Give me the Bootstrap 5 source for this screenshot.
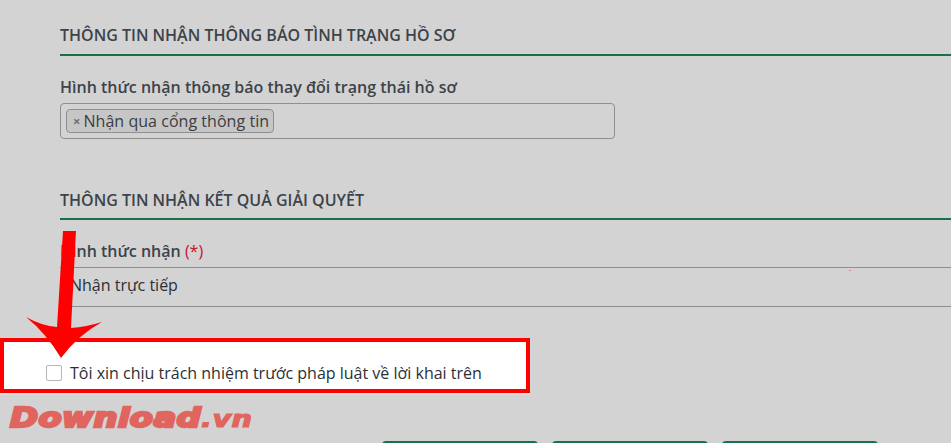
<!DOCTYPE html>
<html lang="vi">
<head>
<meta charset="utf-8">
<link href="https://cdn.jsdelivr.net/npm/bootstrap@5.3.0/dist/css/bootstrap.min.css" rel="stylesheet">
<style>
html,body{height:443px;overflow:hidden}
body{background:#d3d3d3;font-family:"Open Sans",sans-serif;color:#2b2f36;position:relative}
.page-form{padding-left:60px}
.sec-title{font-size:16px;font-weight:600;line-height:20px;padding:25px 0 9px;border-bottom:2px solid #157347;color:#3d4349;margin:0}
.sec-two{padding:0 0 8px;margin-top:51px}
.fld-label{font-size:16px;font-weight:600;line-height:20px;margin:21px 0 0;color:#3d4349}
.tag-box{width:555px;height:36px;border:1px solid #8f8f8f;border-radius:4px;padding:5px;margin-top:6px}
.tag-chip{font-size:16px;line-height:22px;height:24px;padding:0 4px 0 6px;background:#c6c6c6;border:1px solid #8f8f8f;border-radius:4px;color:#3a3d42;gap:3px;letter-spacing:.04px}
.tag-x{font-size:13px;color:#6c6f73;font-weight:700}
.req{color:#c8102e;font-weight:400}
.plain-sel{border-top:1px solid #8f8f8f;border-bottom:1px solid #8f8f8f;height:40px;margin-top:6px;padding-left:10px;font-size:16px;line-height:35px}
.confirm-box{width:530px;height:55px;margin-top:31px;border:4px solid #f00;background:#fff;padding:21px 0 0 42px;gap:8px;font-size:16px;line-height:20px;box-shadow:0 2px 0 #dedede}
.fake-check{width:16px;height:16px;border:1px solid #b5b5b5;border-radius:2px;background:#fff;margin-top:2px}
.foot-row{margin-top:12px;height:38px}
.logo-slot{width:382px;padding-left:10px}
.wm-logo{font-family:"DejaVu Sans",sans-serif;font-weight:700;font-style:italic;font-size:27px;line-height:26px;color:#e0655f;-webkit-text-stroke:2.4px #e0655f;letter-spacing:.3px;transform:scaleX(1.25);transform-origin:left center;white-space:nowrap}
.wm-logo span{font-size:23px;-webkit-text-stroke:1.2px #e0655f}
.act-row{gap:14px;height:38px;overflow:hidden}
.act-btn{width:156px;height:30px;margin-top:36px;background:#157347;border:0;border-radius:4px}
.arrow-over{position:absolute;left:0;top:225px;width:120px;height:140px;pointer-events:none}
.stray-dot{position:absolute;left:849px;top:270px;width:2px;height:1px;background:#e77}
</style>
</head>
<body>
<div class="page-form">
  <h6 class="sec-title">THÔNG TIN NHẬN THÔNG BÁO TÌNH TRẠNG HỒ SƠ</h6>
  <p class="fld-label">Hình thức nhận thông báo thay đổi trạng thái hồ sơ</p>
  <div class="tag-box d-flex align-items-start">
    <span class="tag-chip d-inline-flex align-items-center"><span class="tag-x">×</span>Nhận qua cổng thông tin</span>
  </div>
  <h6 class="sec-title sec-two">THÔNG TIN NHẬN KẾT QUẢ GIẢI QUYẾT</h6>
  <p class="fld-label">Hình thức nhận <span class="req">(*)</span></p>
  <div class="plain-sel">Nhận trực tiếp</div>
</div>
<div class="confirm-box d-flex align-items-start">
  <span class="fake-check flex-shrink-0"></span>
  <span>Tôi xin chịu trách nhiệm trước pháp luật về lời khai trên</span>
</div>
<div class="foot-row d-flex">
  <div class="logo-slot flex-shrink-0"><div class="wm-logo">Download<span>.vn</span></div></div>
  <div class="act-row d-flex">
    <button class="act-btn" type="button"></button>
    <button class="act-btn" type="button"></button>
    <button class="act-btn" type="button"></button>
  </div>
</div>
<span class="stray-dot"></span>
<svg class="arrow-over" viewBox="0 0 120 140"><path fill="#f00" d="M63 6L76 6L71 103Q86 102 102 97Q78 110 61 133Q46 108 26 92Q42 101 57 102Z"/></svg>
<script src="https://cdn.jsdelivr.net/npm/bootstrap@5.3.0/dist/js/bootstrap.bundle.min.js"></script>
</body>
</html>
